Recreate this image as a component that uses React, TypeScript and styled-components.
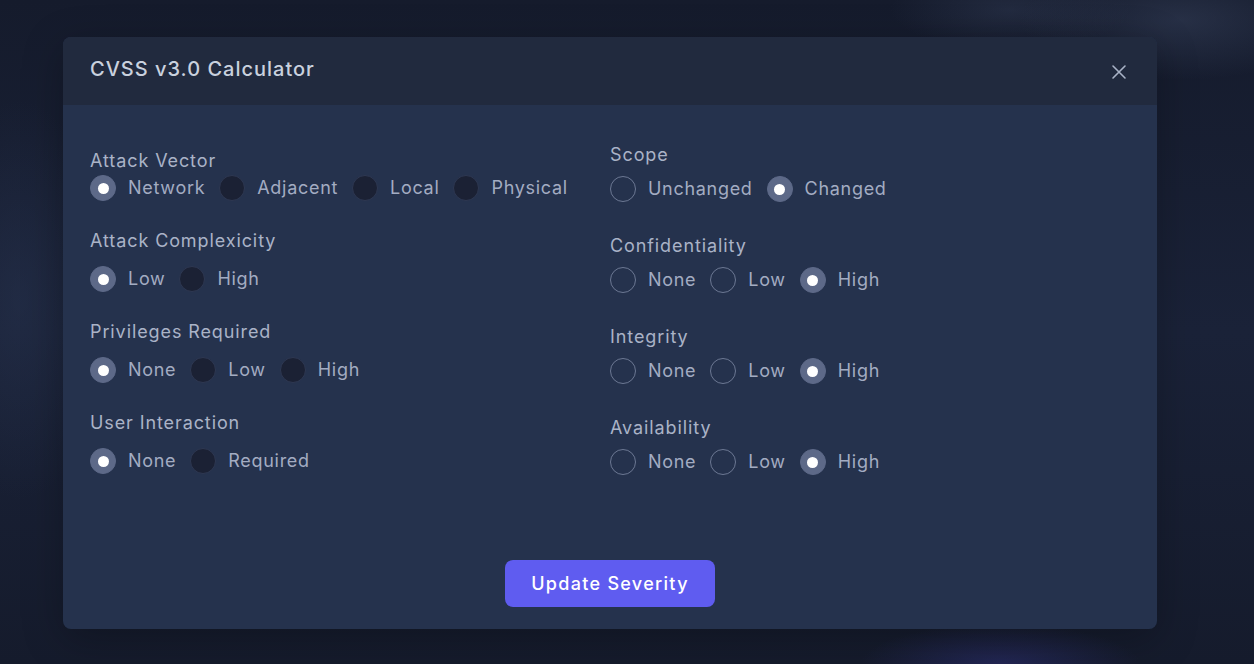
import styled, { createGlobalStyle } from 'styled-components';

const GlobalStyle = createGlobalStyle`
  html, body {
    margin: 0;
    padding: 0;
  }
  body {
    width: 1254px;
    height: 664px;
    overflow: hidden;
    font-family: 'Inter', 'Open Sans', sans-serif;
    background-color: #161d30;
    background-image:
      radial-gradient(ellipse 160px 60px at 1180px 20px, rgba(60, 72, 100, 0.45), transparent),
      radial-gradient(ellipse 120px 40px at 1010px 10px, rgba(60, 72, 100, 0.35), transparent),
      radial-gradient(ellipse 90px 200px at 20px 300px, rgba(40, 52, 80, 0.5), transparent),
      radial-gradient(ellipse 140px 40px at 1000px 664px, rgba(60, 60, 160, 0.35), transparent),
      linear-gradient(180deg, #151b2c 0%, #1a2238 50%, #151b2c 100%);
  }
`;

type Option = { label: string; checked?: boolean };
type Metric = { title: string; options: Option[]; tight?: boolean };

const left: Metric[] = [
  {
    title: 'Attack Vector',
    tight: true,
    options: [{ label: 'Network', checked: true }, { label: 'Adjacent' }, { label: 'Local' }, { label: 'Physical' }],
  },
  { title: 'Attack Complexicity', options: [{ label: 'Low', checked: true }, { label: 'High' }] },
  {
    title: 'Privileges Required',
    options: [{ label: 'None', checked: true }, { label: 'Low' }, { label: 'High' }],
  },
  { title: 'User Interaction', options: [{ label: 'None', checked: true }, { label: 'Required' }] },
];

const right: Metric[] = [
  { title: 'Scope', options: [{ label: 'Unchanged' }, { label: 'Changed', checked: true }] },
  {
    title: 'Confidentiality',
    options: [{ label: 'None' }, { label: 'Low' }, { label: 'High', checked: true }],
  },
  { title: 'Integrity', options: [{ label: 'None' }, { label: 'Low' }, { label: 'High', checked: true }] },
  {
    title: 'Availability',
    options: [{ label: 'None' }, { label: 'Low' }, { label: 'High', checked: true }],
  },
];

const App = () => {
  return (
    <>
      <GlobalStyle />
      <Modal>
        <Header>
          <Title>CVSS v3.0 Calculator</Title>
          <Close aria-label="close">
            <svg width="16" height="16" viewBox="0 0 16 16" fill="none">
              <path d="M2 2L14 14M14 2L2 14" stroke="#a9b3c7" strokeWidth="1.6" strokeLinecap="round" />
            </svg>
          </Close>
        </Header>
        <Body>
          <Columns>
            <Column $top={44} $groupGap={28}>
              {left.map((m) => (
                <Group key={m.title} $gap={m.tight ? 2 : 13}>
                  <GroupLabel>{m.title}</GroupLabel>
                  <Options>
                    {m.options.map((o) => (
                      <OptionItem key={o.label}>
                        <Radio $checked={!!o.checked} $variant="filled" />
                        <OptionText>{o.label}</OptionText>
                      </OptionItem>
                    ))}
                  </Options>
                </Group>
              ))}
            </Column>
            <Column $top={38} $groupGap={32}>
              {right.map((m) => (
                <Group key={m.title} $gap={9}>
                  <GroupLabel>{m.title}</GroupLabel>
                  <Options>
                    {m.options.map((o) => (
                      <OptionItem key={o.label}>
                        <Radio $checked={!!o.checked} $variant="outline" />
                        <OptionText>{o.label}</OptionText>
                      </OptionItem>
                    ))}
                  </Options>
                </Group>
              ))}
            </Column>
          </Columns>
          <Footer>
            <UpdateButton>Update Severity</UpdateButton>
          </Footer>
        </Body>
      </Modal>
    </>
  );
};

const Modal = styled.div`
  margin: 37px 0 0 63px;
  width: 1094px;
  height: 592px;
  border-radius: 8px;
  overflow: hidden;
  background: #25324d;
  display: flex;
  flex-direction: column;
  box-shadow: 0 10px 40px rgba(0, 0, 0, 0.25);
`;

const Header = styled.div`
  height: 68px;
  flex-shrink: 0;
  background: #212a3e;
  display: flex;
  align-items: center;
  justify-content: space-between;
  padding: 0 30px 0 27px;
`;

const Title = styled.h2`
  margin: 0;
  font-size: 20px;
  font-weight: 500;
  color: #c9d1de;
  letter-spacing: 1px;
  transform: translateY(-2px);
`;

const Close = styled.button`
  border: none;
  background: none;
  padding: 0;
  width: 16px;
  height: 16px;
  display: flex;
  cursor: pointer;
  transform: translateY(1px);
`;

const Body = styled.div`
  flex: 1;
  display: flex;
  flex-direction: column;
  padding: 0 27px 22px;
`;

const Columns = styled.div`
  display: grid;
  grid-template-columns: 1fr 1fr;
`;

const Column = styled.div<{ $top: number; $groupGap: number }>`
  display: flex;
  flex-direction: column;
  padding-top: ${(p) => p.$top}px;
  gap: ${(p) => p.$groupGap}px;
`;

const Group = styled.div<{ $gap: number }>`
  display: flex;
  flex-direction: column;
  gap: ${(p) => p.$gap}px;
`;

const GroupLabel = styled.div`
  font-size: 18px;
  line-height: 24px;
  letter-spacing: 0.9px;
  color: #aab3c7;
`;

const Options = styled.div`
  display: flex;
  align-items: center;
  gap: 14px;
`;

const OptionItem = styled.label`
  display: flex;
  align-items: center;
  gap: 12px;
  cursor: pointer;
`;

const Radio = styled.span<{ $checked: boolean; $variant: 'filled' | 'outline' }>`
  position: relative;
  width: 26px;
  height: 26px;
  box-sizing: border-box;
  border-radius: 50%;
  flex-shrink: 0;
  background: ${(p) => (p.$checked ? '#5d6988' : p.$variant === 'filled' ? '#1b2134' : 'transparent')};
  border: 1px solid
    ${(p) => (p.$checked ? '#5d6988' : p.$variant === 'filled' ? '#2e3852' : '#6c7893')};

  &::after {
    content: '';
    display: ${(p) => (p.$checked ? 'block' : 'none')};
    position: absolute;
    left: 50%;
    top: 50%;
    width: 11px;
    height: 11px;
    margin: -5.5px 0 0 -5.5px;
    border-radius: 50%;
    background: #ffffff;
  }
`;

const OptionText = styled.span`
  font-size: 18px;
  line-height: 26px;
  letter-spacing: 0.7px;
  color: #a3acc2;
`;

const Footer = styled.div`
  margin-top: auto;
  display: flex;
  justify-content: center;
`;

const UpdateButton = styled.button`
  width: 210px;
  height: 47px;
  border: none;
  border-radius: 8px;
  background: #5f5cf0;
  color: #ffffff;
  font-family: 'Inter', 'Open Sans', sans-serif;
  font-size: 18px;
  font-weight: 500;
  letter-spacing: 1.3px;
  cursor: pointer;
`;

export default App;
